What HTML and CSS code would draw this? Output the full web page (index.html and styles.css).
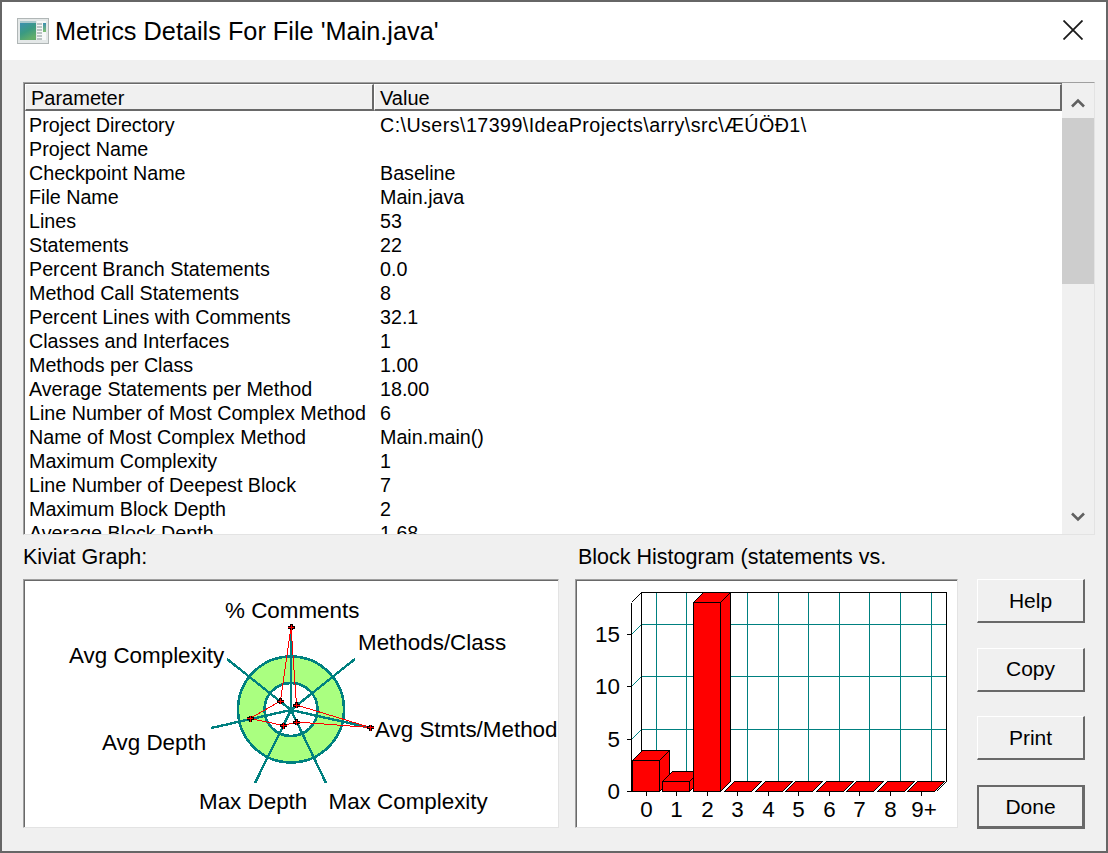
FILE: index.html
```html
<!DOCTYPE html>
<html lang="en">
<head>
<meta charset="utf-8">
<title>Metrics Details</title>
<link rel="stylesheet" href="styles.css">
</head>
<body>
<div class="window">
  <header class="titlebar">
    <svg class="app-icon" width="32" height="26" viewBox="0 0 32 26">
      <defs>
        <linearGradient id="iconGrad" x1="0" y1="0" x2="0.5" y2="1">
          <stop offset="0" stop-color="#3c8fb0"/>
          <stop offset="0.55" stop-color="#3a9a82"/>
          <stop offset="1" stop-color="#62ad6a"/>
        </linearGradient>
        <linearGradient id="iconBar" x1="0" y1="0" x2="0" y2="1">
          <stop offset="0" stop-color="#3c8fb0"/>
          <stop offset="1" stop-color="#7fbf70"/>
        </linearGradient>
      </defs>
      <rect x="0.5" y="0.5" width="31" height="25" fill="#e4e8e8" stroke="#b0b6b6"/>
      <rect x="3" y="3" width="16" height="2" fill="#a8c8cc"/>
      <rect x="3" y="5" width="16" height="17" fill="url(#iconGrad)"/>
      <rect x="20" y="3" width="9" height="19" fill="#f6f8f8"/>
      <path d="M20 6h5M20 9h5M20 12h5M20 15h5M20 18h5M20 21h5" stroke="#a6b2b2" stroke-width="1.3"/>
      <rect x="26" y="5" width="3" height="9" fill="url(#iconBar)"/>
    </svg>
    <h1 class="title">Metrics Details For File 'Main.java'</h1>
    <svg class="close" width="20" height="20" viewBox="0 0 20 20">
      <path d="M0.5 0.5L19.5 19.5M19.5 0.5L0.5 19.5" stroke="#1a1a1a" stroke-width="1.8" fill="none"/>
    </svg>
  </header>
  <main class="content">
    <section class="list">
      <div class="list-main">
        <div class="list-head">
          <div class="hcell hcell-param">Parameter</div>
          <div class="hcell hcell-value">Value</div>
        </div>
        <div class="rows">
          <div class="row"><span class="k">Project Directory</span><span class="v v-path">C:\Users\17399\IdeaProjects\arry\src\ÆÚÖÐ1\</span></div>
          <div class="row"><span class="k">Project Name</span><span class="v"></span></div>
          <div class="row"><span class="k">Checkpoint Name</span><span class="v">Baseline</span></div>
          <div class="row"><span class="k">File Name</span><span class="v">Main.java</span></div>
          <div class="row"><span class="k">Lines</span><span class="v">53</span></div>
          <div class="row"><span class="k">Statements</span><span class="v">22</span></div>
          <div class="row"><span class="k">Percent Branch Statements</span><span class="v">0.0</span></div>
          <div class="row"><span class="k">Method Call Statements</span><span class="v">8</span></div>
          <div class="row"><span class="k">Percent Lines with Comments</span><span class="v">32.1</span></div>
          <div class="row"><span class="k">Classes and Interfaces</span><span class="v">1</span></div>
          <div class="row"><span class="k">Methods per Class</span><span class="v">1.00</span></div>
          <div class="row"><span class="k">Average Statements per Method</span><span class="v">18.00</span></div>
          <div class="row"><span class="k">Line Number of Most Complex Method</span><span class="v">6</span></div>
          <div class="row"><span class="k">Name of Most Complex Method</span><span class="v">Main.main()</span></div>
          <div class="row"><span class="k">Maximum Complexity</span><span class="v">1</span></div>
          <div class="row"><span class="k">Line Number of Deepest Block</span><span class="v">7</span></div>
          <div class="row"><span class="k">Maximum Block Depth</span><span class="v">2</span></div>
          <div class="row"><span class="k">Average Block Depth</span><span class="v">1.68</span></div>
        </div>
      </div>
      <div class="scrollbar">
        <svg class="arrow" width="14" height="10" viewBox="0 0 14 10"><path d="M1 8.5L7 2.5L13 8.5" fill="none" stroke="#606060" stroke-width="2.6"/></svg>
        <div class="thumb"></div>
        <div class="track"></div>
        <svg class="arrow" width="14" height="10" viewBox="0 0 14 10"><path d="M1 1.5L7 7.5L13 1.5" fill="none" stroke="#606060" stroke-width="2.6"/></svg>
      </div>
    </section>
    <section class="lower">
      <div class="chart-col chart-col-kiviat">
        <div class="chart-label">Kiviat Graph:</div>
        <div class="chart-frame">
          <svg class="chart" width="534" height="247" viewBox="24 580 534 247">
            <defs>
              <g id="mk">
                <path d="M-3.5 0H3.5" stroke="#000" stroke-width="3"/>
                <path d="M0 -3V3" stroke="#000" stroke-width="3"/>
                <path d="M-3 0H3M0 -2.5V3" stroke="#f00" stroke-width="1"/>
              </g>
            </defs>
            <circle class="ring" cx="291" cy="709.5" r="53" fill="#aaff80"/>
            <circle class="ring" cx="291" cy="709.5" r="26.5" fill="#fff"/>
            <g class="spokes">
              <path d="M291 710V627"/>
              <path d="M291 710L355 659"/>
              <path d="M291 710L371 728"/>
              <path d="M291 710L326 783"/>
              <path d="M291 710L255 783"/>
              <path d="M291 710L211 728"/>
              <path d="M291 710L227 659"/>
            </g>
            <polygon class="trace" points="291,627 296.5,705 370.5,727.5 296.5,722 283.5,725.5 250,718.5 280.5,701"/>
            <use href="#mk" x="291" y="627"/>
            <use href="#mk" x="296.5" y="705"/>
            <use href="#mk" x="370.5" y="727.5"/>
            <use href="#mk" x="296.5" y="722"/>
            <use href="#mk" x="283.5" y="725.5"/>
            <use href="#mk" x="250" y="718.5"/>
            <use href="#mk" x="280.5" y="701"/>
            <g class="chart-text">
              <text x="225" y="618">% Comments</text>
              <text x="358" y="650">Methods/Class</text>
              <text x="375" y="737">Avg Stmts/Method</text>
              <text x="328.5" y="809">Max Complexity</text>
              <text x="199" y="809">Max Depth</text>
              <text x="102" y="750">Avg Depth</text>
              <text x="69" y="663">Avg Complexity</text>
            </g>
          </svg>
        </div>
      </div>
      <div class="chart-col chart-col-hist">
        <div class="chart-label">Block Histogram (statements vs.</div>
        <div class="chart-frame">
          <svg class="chart" width="381" height="247" viewBox="576 580 381 247">
            <g class="lines" stroke="#008080" stroke-width="1" fill="none">
              <path d="M641.5 624.5H946.5M641.5 676.5H946.5M641.5 729.5H946.5"/>
              <path d="M656.5 592.5V781.5M686.5 592.5V781.5M717.5 592.5V781.5M747.5 592.5V781.5M778.5 592.5V781.5M808.5 592.5V781.5M839.5 592.5V781.5M869.5 592.5V781.5M900.5 592.5V781.5M931.5 592.5V781.5"/>
              <path d="M631.5 634.5L641.5 624.5M631.5 686.5L641.5 676.5M631.5 739.5L641.5 729.5"/>
            </g>
            <g class="lines" stroke="#000" stroke-width="1" fill="none">
              <path d="M631.5 602.5L641.5 592.5H946.5V781.5L936.5 791.5"/>
              <path d="M641.5 592.5V781.5"/>
              <path d="M631.5 602.5V791.5M627 634.5H631.5M627 686.5H631.5M627 739.5H631.5M627 791.5H631.5"/>
              <path d="M646.5 791.5V796M676.5 791.5V796M707.5 791.5V796M737.5 791.5V796M768.5 791.5V796M798.5 791.5V796M829.5 791.5V796M859.5 791.5V796M890.5 791.5V796M921.5 791.5V796"/>
            </g>
            <g class="bars">
              <polygon points="724.5,791.5 734.5,781.5 761.5,781.5 751.5,791.5"/>
              <polygon points="755.5,791.5 765.5,781.5 792.5,781.5 782.5,791.5"/>
              <polygon points="785.5,791.5 795.5,781.5 822.5,781.5 812.5,791.5"/>
              <polygon points="816.5,791.5 826.5,781.5 853.5,781.5 843.5,791.5"/>
              <polygon points="846.5,791.5 856.5,781.5 883.5,781.5 873.5,791.5"/>
              <polygon points="877.5,791.5 887.5,781.5 914.5,781.5 904.5,791.5"/>
              <polygon points="907.5,791.5 917.5,781.5 944.5,781.5 934.5,791.5"/>
              <path d="M632.5 760.5H659.5V791.5H632.5Z"/>
              <path d="M632.5 760.5L642.5 750.5H669.5L659.5 760.5Z"/>
              <path d="M659.5 760.5L669.5 750.5V781.5L659.5 791.5Z"/>
              <path d="M662.5 781.5H689.5V791.5H662.5Z"/>
              <path d="M662.5 781.5L672.5 771.5H699.5L689.5 781.5Z"/>
              <path d="M689.5 781.5L699.5 771.5V781.5L689.5 791.5Z"/>
              <path d="M693.5 602.5H720.5V791.5H693.5Z"/>
              <path d="M693.5 602.5L703.5 592.5H730.5L720.5 602.5Z"/>
              <path d="M720.5 602.5L730.5 592.5V781.5L720.5 791.5Z"/>
            </g>
            <g class="chart-text">
              <text class="end" x="620" y="642">15</text>
              <text class="end" x="620" y="694">10</text>
              <text class="end" x="620" y="747">5</text>
              <text class="end" x="620" y="799">0</text>
              <text class="mid" x="646.5" y="817">0</text>
              <text class="mid" x="676.5" y="817">1</text>
              <text class="mid" x="707.5" y="817">2</text>
              <text class="mid" x="737.5" y="817">3</text>
              <text class="mid" x="768.5" y="817">4</text>
              <text class="mid" x="798.5" y="817">5</text>
              <text class="mid" x="829.5" y="817">6</text>
              <text class="mid" x="859.5" y="817">7</text>
              <text class="mid" x="890.5" y="817">8</text>
              <text class="mid" x="924" y="817">9+</text>
            </g>
          </svg>
        </div>
      </div>
      <div class="actions">
        <button class="btn" type="button">Help</button>
        <button class="btn" type="button">Copy</button>
        <button class="btn" type="button">Print</button>
        <button class="btn btn-default" type="button">Done</button>
      </div>
    </section>
  </main>
</div>
</body>
</html>
```
FILE: styles.css
```css
* { box-sizing: border-box; }
html, body { margin: 0; padding: 0; }
body {
  width: 1108px;
  height: 853px;
  overflow: hidden;
  font-family: "Liberation Sans", Arial, sans-serif;
  color: #000;
}
.window {
  width: 1108px;
  height: 853px;
  border: 2px solid #666;
  background: #f0f0f0;
  display: flex;
  flex-direction: column;
}
.titlebar {
  height: 58px;
  flex: none;
  background: #fff;
  display: flex;
  align-items: center;
  padding: 0 23px 0 15px;
}
.app-icon { flex: none; margin: 0 6px 0 0; }
.title {
  margin: 0;
  font-size: 25.3px;
  font-weight: 400;
  flex: 1;
}
.close { flex: none; margin-bottom: 2px; }
.content {
  flex: 1;
  padding: 22px 11px 0 21px;
  display: flex;
  flex-direction: column;
}
.list {
  height: 453px;
  flex: none;
  display: flex;
  background: #fff;
  border-top: 1px solid #a0a0a0;
  border-left: 1px solid #a0a0a0;
  border-right: 1px solid #e3e3e3;
  border-bottom: 1px solid #e3e3e3;
  box-shadow: inset 1px 1px 0 #696969;
}
.list-main {
  flex: 1;
  min-width: 0;
  overflow: hidden;
  padding: 1px 0 0 1px;
}
.list-head { display: flex; height: 27px; }
.hcell {
  height: 27px;
  background: #f0f0f0;
  border-top: 1px solid #fff;
  border-left: 1px solid #fff;
  border-right: 2px solid #696969;
  border-bottom: 2px solid #696969;
  font-size: 20px;
  line-height: 27px;
  padding-left: 5px;
}
.hcell-param { width: 349px; }
.hcell-value { flex: 1; }
.rows { padding-top: 2px; }
.row {
  display: flex;
  height: 24px;
  line-height: 24px;
  font-size: 19.7px;
  white-space: nowrap;
}
.k { width: 355px; flex: none; padding-left: 4px; }
.v { flex: 1; }
.v-path { letter-spacing: 0.43px; }
.scrollbar {
  width: 32px;
  flex: none;
  background: #f0f0f0;
  display: flex;
  flex-direction: column;
  align-items: center;
  padding-top: 15px;
}
.arrow { flex: none; }
.thumb {
  flex: none;
  width: 100%;
  height: 166px;
  margin-top: 10px;
  background: #cdcdcd;
}
.track { flex: 1; }
.scrollbar .arrow:last-child { margin-bottom: 12px; }
.lower {
  flex: 1;
  display: flex;
  padding-top: 10px;
}
.chart-col { display: flex; flex-direction: column; flex: none; }
.chart-col-kiviat { width: 552px; }
.chart-col-hist { width: 402px; }
.chart-label {
  height: 34px;
  line-height: 24px;
  font-size: 21.5px;
  white-space: nowrap;
}
.chart-col-hist .chart-label { padding-left: 3px; }
.chart-frame {
  background: #fff;
  border-top: 1px solid #a0a0a0;
  border-left: 1px solid #a0a0a0;
  border-right: 1px solid #e3e3e3;
  border-bottom: 1px solid #e3e3e3;
  height: 249px;
  box-shadow: inset 1px 1px 0 #696969;
  overflow: hidden;
}
.chart-col-kiviat .chart-frame { width: 536px; }
.chart-col-hist .chart-frame { width: 383px; }
.chart { display: block; }
.chart-text text { font-family: "Liberation Sans", Arial, sans-serif; font-size: 22.4px; fill: #000; }
.chart-text text.end { text-anchor: end; }
.chart-text text.mid { text-anchor: middle; }
.ring { stroke: #008080; stroke-width: 2.6; shape-rendering: crispEdges; }
.spokes path { stroke: #008080; stroke-width: 2.4; fill: none; shape-rendering: crispEdges; }
.trace { fill: none; stroke: #f00; stroke-width: 1; shape-rendering: crispEdges; }
#mk path { fill: none; shape-rendering: crispEdges; }
.lines path { shape-rendering: crispEdges; }
.bars > * { fill: #f00; stroke: #000; stroke-width: 1; shape-rendering: crispEdges; }
.actions {
  flex: none;
  width: 108px;
  display: flex;
  flex-direction: column;
  gap: 24.67px;
  padding-top: 34px;
}
.btn {
  width: 108px;
  height: 44px;
  flex: none;
  margin: 0;
  padding: 0;
  background: #f0f0f0;
  border-top: 1px solid #fff;
  border-left: 1px solid #fff;
  border-right: 2px solid #696969;
  border-bottom: 2px solid #696969;
  font-family: "Liberation Sans", Arial, sans-serif;
  font-size: 21px;
  color: #000;
}
.btn-default {
  padding: 2px 0 0;
  border: 2px solid #696969;
  border-right-width: 3px;
  border-bottom-width: 3px;
}
```
